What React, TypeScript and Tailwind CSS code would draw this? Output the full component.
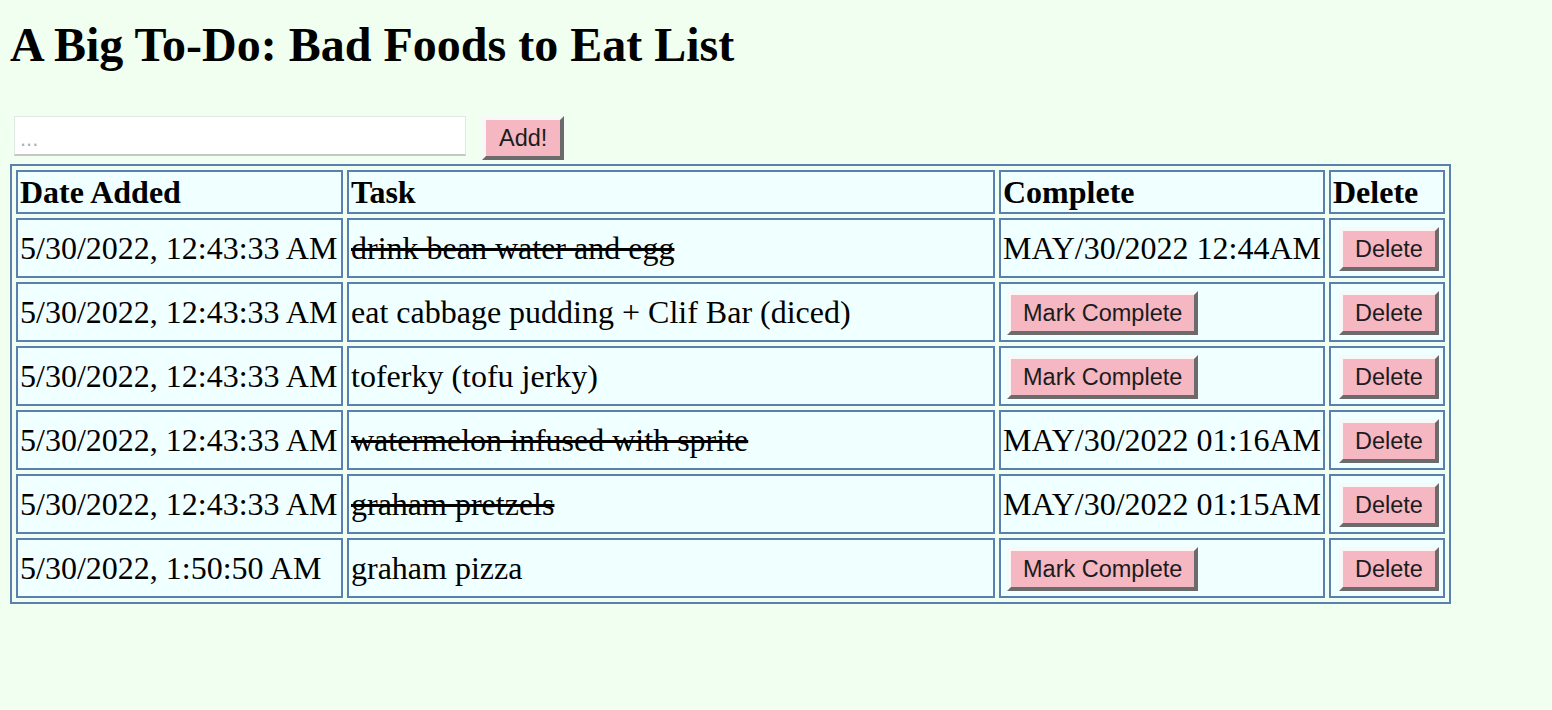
import React, { useState } from 'react';

type Todo = {
  added: string;
  task: string;
  completedAt: string | null;
};

const initialTodos: Todo[] = [
  { added: '5/30/2022, 12:43:33 AM', task: 'drink bean water and egg', completedAt: 'MAY/30/2022 12:44AM' },
  { added: '5/30/2022, 12:43:33 AM', task: 'eat cabbage pudding + Clif Bar (diced)', completedAt: null },
  { added: '5/30/2022, 12:43:33 AM', task: 'toferky (tofu jerky)', completedAt: null },
  { added: '5/30/2022, 12:43:33 AM', task: 'watermelon infused with sprite', completedAt: 'MAY/30/2022 01:16AM' },
  { added: '5/30/2022, 12:43:33 AM', task: 'graham pretzels', completedAt: 'MAY/30/2022 01:15AM' },
  { added: '5/30/2022, 1:50:50 AM', task: 'graham pizza', completedAt: null },
];

// old-school outset button look
const btn =
  "h-[44px] px-[12px] bg-[#f5b7c1] text-[#1c1c1c] text-[23.5px] leading-[26px] border-4 border-t-[#f8f8f8] border-l-[#f8f8f8] border-b-[#6b6b6b] border-r-[#6b6b6b] font-['Liberation_Sans',Arial,sans-serif] whitespace-nowrap";

const cell = 'border-2 border-[#5a80b2] bg-[#f0ffff] p-[2px] align-middle text-left';

export default function App() {
  const [todos, setTodos] = useState<Todo[]>(initialTodos);
  const [text, setText] = useState('');

  const add = () => {
    if (!text.trim()) return;
    setTodos([...todos, { added: new Date().toLocaleString(), task: text, completedAt: null }]);
    setText('');
  };

  return (
    <div className="min-h-screen bg-[#f0fff0] px-[10px] text-black font-['Liberation_Serif','Times_New_Roman',serif]">
      <h1 className="pt-[17px] text-[48px] leading-[55px] font-bold">A Big To-Do: Bad Foods to Eat List</h1>

      <div className="mt-[44px] pl-[4px] flex items-start">
        <input
          value={text}
          onChange={(e) => setText(e.target.value)}
          placeholder="..."
          className="w-[452px] h-[40px] bg-white border border-[#e2e8e2] border-b-2 border-b-[#c6c6c6] px-[5px] pt-[6px] text-[22px] font-['Liberation_Sans',Arial,sans-serif] placeholder:text-[#b0b0b0] outline-none"
        />
        <button onClick={add} className={btn + ' ml-[16px] px-[13px]'}>
          Add!
        </button>
      </div>

      <table className="mt-[4px] w-[1441px] border-2 border-[#5a80b2] border-separate border-spacing-[4px] text-[32px]">
        <thead>
          <tr>
            <th className={cell + ' box-content w-[319px] h-[36px] leading-[36px] font-bold'}>Date Added</th>
            <th className={cell + ' leading-[36px] font-bold'}>Task</th>
            <th className={cell + ' box-content w-[318px] leading-[36px] font-bold'}>Complete</th>
            <th className={cell + ' box-content w-[108px] leading-[36px] font-bold'}>Delete</th>
          </tr>
        </thead>
        <tbody>
          {todos.map((t, i) => (
            <tr key={i}>
              <td className={cell + ' whitespace-nowrap leading-[36px]'}>{t.added}</td>
              <td className={cell + ' leading-[36px]'}>
                <span className={t.completedAt ? 'line-through' : ''}>{t.task}</span>
              </td>
              <td className={cell + ' whitespace-nowrap leading-[36px]'}>
                {t.completedAt ? (
                  t.completedAt
                ) : (
                  <div className="h-[52px] pt-[5px] pl-[4px] flex items-start">
                    <button
                      className={btn}
                      onClick={() =>
                        setTodos(todos.map((x, j) => (j === i ? { ...x, completedAt: 'MAY/30/2022 01:50AM' } : x)))
                      }
                    >
                      Mark Complete
                    </button>
                  </div>
                )}
              </td>
              <td className={cell}>
                <div className="h-[52px] pt-[5px] pl-[6px] flex items-start">
                  <button className={btn} onClick={() => setTodos(todos.filter((_, j) => j !== i))}>
                    Delete
                  </button>
                </div>
              </td>
            </tr>
          ))}
        </tbody>
      </table>
    </div>
  );
}
